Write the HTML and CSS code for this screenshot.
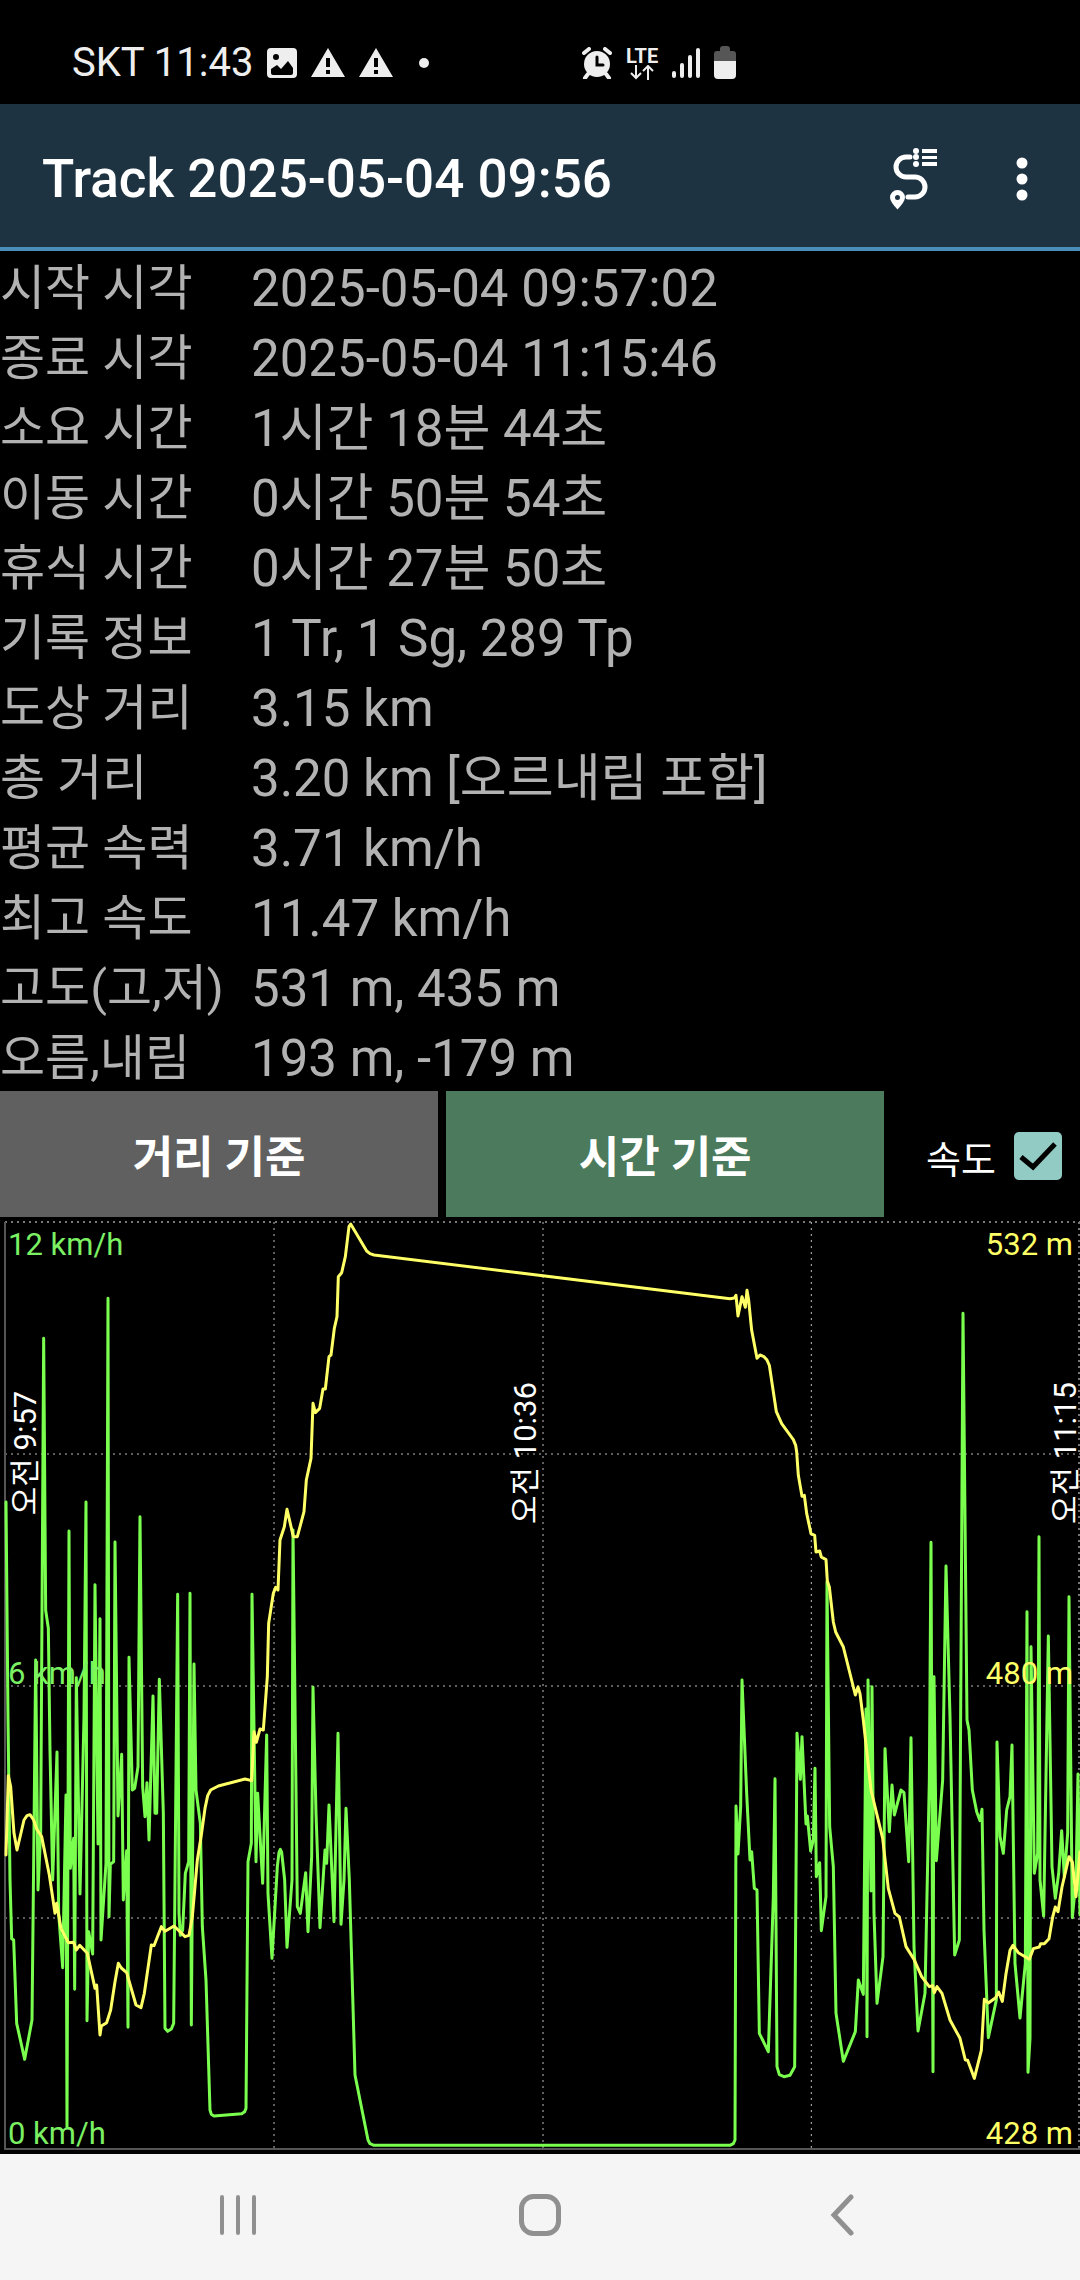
FILE: index.html
```html
<!DOCTYPE html>
<html lang="ko">
<head>
<meta charset="utf-8">
<meta name="viewport" content="width=device-width, initial-scale=1">
<title>Track 2025-05-04 09:56</title>
<link rel="stylesheet" href="styles.css">
</head>
<body>
<div class="status-bar">
  <div class="status-left">
    <span class="carrier">SKT 11:43</span>
    <svg class="status-icon" width="30" height="30" viewBox="0 0 30 30" aria-hidden="true">
      <path fill="currentColor" fill-rule="evenodd" d="M4 0h22a4 4 0 0 1 4 4v22a4 4 0 0 1-4 4H4a4 4 0 0 1-4-4V4a4 4 0 0 1 4-4zM4 21v4q0 2 2 2h18q2 0 2-2v-5l-5-7-7 8-4-4zM9 6a3 3 0 1 0 0 6 3 3 0 0 0 0-6z"/>
    </svg>
    <svg class="status-icon" width="34" height="30" viewBox="0 0 34 30" aria-hidden="true">
      <path fill="currentColor" fill-rule="evenodd" d="M17 0L34 29H0zM15 10v9h4v-9zM15 22v4h4v-4z"/>
    </svg>
    <svg class="status-icon" width="34" height="30" viewBox="0 0 34 30" aria-hidden="true">
      <path fill="currentColor" fill-rule="evenodd" d="M17 0L34 29H0zM15 10v9h4v-9zM15 22v4h4v-4z"/>
    </svg>
    <span class="more-dot"></span>
  </div>
  <div class="status-right">
    <svg width="30" height="32" viewBox="0 0 30 32" aria-hidden="true">
      <circle cx="15" cy="17" r="13" fill="currentColor"/>
      <path d="M2 6l5-4M28 6l-5-4M6 27l-3 4M24 27l3 4" fill="none" stroke="currentColor" stroke-width="4" stroke-linecap="round"/>
      <path d="M15 10v8h6" fill="none" stroke="#000" stroke-width="3" stroke-linecap="round"/>
    </svg>
    <span class="network">LTE
      <svg width="24" height="15" viewBox="0 0 24 15" aria-hidden="true">
        <path d="M6 0v13M1 8l5 5 5-5M18 15V1M13 6l5-5 5 5" fill="none" stroke="currentColor" stroke-width="2"/>
      </svg>
    </span>
    <svg width="28" height="32" viewBox="0 0 28 32" aria-hidden="true">
      <path d="M2 26v3M10 18v11M18 10v19M26 3v26" fill="none" stroke="currentColor" stroke-width="4" stroke-linecap="round"/>
    </svg>
    <svg width="22" height="34" viewBox="0 0 22 34" aria-hidden="true">
      <path fill="#565656" d="M0 16V8q0-3 3-3h3V3q0-3 3-3h4q3 0 3 3v2h3q3 0 3 3v8z"/>
      <path fill="currentColor" d="M0 15h22v14q0 4-4 4H4q-4 0-4-4z"/>
    </svg>
  </div>
</div>

<header class="app-bar">
  <h1 class="title">Track 2025-05-04 09:56</h1>
  <button class="icon-button" type="button" aria-label="Track list">
    <svg width="48" height="64" viewBox="0 0 48 64" aria-hidden="true">
      <path d="M20 10h-4A10 10 0 0 0 16 30H25A10 10 0 0 1 25 50H18" fill="none" stroke="currentColor" stroke-width="5" stroke-linecap="round"/>
      <g fill="currentColor">
        <circle cx="26" cy="4" r="3"/><circle cx="26" cy="10" r="3"/><circle cx="26" cy="17" r="3"/>
        <path d="M32 2h15v4H32zM32 9h15v3H32zM32 15h15v4H32z"/>
        <path fill-rule="evenodd" d="M7.500 43a7.500 7.500 0 0 1 7.500 7.500q0 4-7.500 12Q0 54.500 0 50.500A7.500 7.500 0 0 1 7.500 43zm0 5a2.500 2.500 0 0 0 0 5 2.500 2.500 0 0 0 0-5z"/>
      </g>
    </svg>
  </button>
  <button class="icon-button" type="button" aria-label="Menu">
    <svg width="12" height="44" viewBox="0 0 12 44" fill="currentColor" aria-hidden="true">
      <circle cx="6" cy="6" r="5.500"/><circle cx="6" cy="22" r="5.500"/><circle cx="6" cy="38" r="5.500"/>
    </svg>
  </button>
</header>

<main class="content">
  <table class="stats">
    <tbody>
      <tr><th scope="row">시작 시각</th><td>2025-05-04 09:57:02</td></tr>
      <tr><th scope="row">종료 시각</th><td>2025-05-04 11:15:46</td></tr>
      <tr><th scope="row">소요 시간</th><td>1시간 18분 44초</td></tr>
      <tr><th scope="row">이동 시간</th><td>0시간 50분 54초</td></tr>
      <tr><th scope="row">휴식 시간</th><td>0시간 27분 50초</td></tr>
      <tr><th scope="row">기록 정보</th><td>1 Tr, 1 Sg, 289 Tp</td></tr>
      <tr><th scope="row">도상 거리</th><td>3.15 km</td></tr>
      <tr><th scope="row">총 거리</th><td>3.20 km [오르내림 포함]</td></tr>
      <tr><th scope="row">평균 속력</th><td>3.71 km/h</td></tr>
      <tr><th scope="row">최고 속도</th><td>11.47 km/h</td></tr>
      <tr><th scope="row">고도(고,저)</th><td>531 m, 435 m</td></tr>
      <tr><th scope="row">오름,내림</th><td>193 m, -179 m</td></tr>
    </tbody>
  </table>

  <div class="controls">
    <button class="basis" type="button">거리 기준</button>
    <button class="basis basis-active" type="button">시간 기준</button>
    <div class="speed-option">
      <label for="speed">속도</label>
      <span class="check">
        <input id="speed" type="checkbox" checked>
        <svg class="tick" width="48" height="48" viewBox="0 0 48 48" aria-hidden="true">
          <path d="M7 25l12 10L41 12" fill="none" stroke="#000" stroke-width="5"/>
        </svg>
      </span>
    </div>
  </div>

  <section class="chart" aria-label="속도, 고도">
    <svg class="plot" viewBox="0 0 3240 2811" preserveAspectRatio="none" aria-hidden="true">
      <g class="grid">
        <path d="M15 711H3240M15 1407H3240M15 2103H3240M822 15V2793M1629 15V2793M2434 15V2793"/>
        <path class="grid-edge" d="M15 15H3240M3237 15V2793"/>
      </g>
      <path class="axis" d="M15 15V2796H3240"/>
      <polyline class="line speed" points="18,855 24,1500 30,1989 35,2165 41,2169 50,2419 74,2527 96,2409 102,1839 107,1329 114,2019 122,1849 131,364 137,1180 145,1234 150,1600 158,1989 171,1605 176,2089 188,2252 198,1734 201,2729 207,942 211,1954 221,1864 224,2317 229,1382 240,2031 252,1500 258,855 261,2411 266,2144 278,2211 285,1103 294,1881 300,1205 303,2169 318,1939 324,244 327,2099 331,1942 341,1934 345,975 354,1797 365,1612 370,2049 380,1901 384,2431 387,1321 397,1719 404,1714 414,1649 420,899 428,1709 435,1799 441,1697 447,1869 459,1437 465,1789 470,1789 478,1387 490,1789 495,2434 503,2443 514,2436 521,2419 533,1132 537,2089 541,2155 548,2139 556,1969 566,1934 570,1129 574,2424 582,1341 588,1719 601,1819 607,2129 618,2289 630,2679 634,2692 642,2697 725,2690 734,2684 738,2674 744,1934 754,1879 756,1132 768,1934 773,1729 788,1999 800,1554 804,2029 816,2224 832,1949 837,1906 841,1897 845,1906 854,1989 861,2191 876,1989 879,939 892,2069 901,2089 917,1967 924,2144 935,1919 939,1411 948,1789 960,2132 975,1899 980,1939 987,1764 1002,2114 1014,1549 1023,2122 1032,1989 1038,1774 1048,1989 1065,2574 1104,2769 1110,2780 1122,2785 2190,2785 2200,2780 2205,2769 2208,1767 2214,1911 2222,1769 2226,1389 2240,1729 2250,1929 2255,1904 2263,2014 2271,2019 2278,2449 2305,2504 2320,2039 2325,1685 2331,2549 2338,2573 2352,2579 2370,2575 2384,2549 2391,1549 2401,1687 2406,1559 2418,1821 2422,1797 2432,1902 2440,1869 2445,1654 2449,1979 2459,1937 2464,2141 2478,2039 2481,1094 2489,1829 2500,1949 2508,2389 2530,2533 2566,2444 2575,2289 2590,2332 2598,1476 2601,2459 2604,1389 2613,2022 2616,1409 2622,2089 2631,2359 2649,2219 2655,1595 2668,1844 2676,1704 2683,1794 2703,1719 2712,1727 2726,1934 2733,1562 2742,2189 2754,2442 2775,2329 2788,1689 2793,976 2799,2564 2802,1379 2809,1931 2828,1689 2838,1047 2850,1500 2864,2214 2878,2169 2889,289 2901,1509 2907,1539 2917,1719 2930,1784 2940,1811 2946,1777 2952,2139 2965,2462 2989,2349 2991,1575 3000,1859 3010,1909 3020,1779 3030,1739 3036,1584 3045,2239 3060,2403 3076,2239 3081,1184 3084,2566 3090,2464 3093,1289 3103,1969 3113,1909 3117,959 3120,1989 3131,2097 3145,1257 3156,1949 3166,2044 3176,1969 3185,1841 3193,1979 3203,1849 3207,1139 3217,2102 3228,1989 3234,1671 3240,2094"/>
      <polyline class="line altitude" points="18,1914 25,1676 32,1709 42,1849 51,1899 72,1809 81,1796 90,1793 101,1809 110,1836 125,1859 148,1974 165,2089 170,2059 183,2134 205,2177 221,2176 229,2199 239,2185 262,2209 285,2314 290,2304 300,2454 304,2427 320,2417 332,2379 345,2294 355,2239 364,2253 380,2267 408,2364 423,2372 433,2329 454,2184 462,2186 484,2129 495,2143 522,2127 555,2159 567,2155 577,2099 592,1929 604,1854 615,1774 623,1736 632,1719 655,1707 735,1686 755,1691 762,1544 769,1576 780,1536 790,1539 802,1379 806,1219 820,1129 827,1111 834,1119 840,969 853,929 861,877 880,959 892,959 912,884 919,789 933,724 939,559 946,587 959,574 969,516 976,516 987,419 993,414 1003,334 1011,299 1015,179 1025,167 1036,119 1047,29 1052,21 1100,102 1110,110 1122,114 2190,245 2203,243 2208,235 2214,297 2226,239 2236,271 2241,220 2246,250 2255,340 2271,424 2280,414 2292,419 2301,429 2308,445 2329,584 2345,620 2380,668 2387,685 2390,705 2395,775 2406,838 2413,835 2420,889 2433,950 2444,955 2448,1005 2459,1002 2464,1020 2478,1028 2482,1092 2488,1110 2500,1215 2507,1245 2530,1290 2566,1434 2574,1410 2580,1430 2590,1509 2613,1719 2648,1864 2665,2015 2685,2089 2698,2100 2718,2189 2742,2227 2765,2279 2788,2309 2798,2306 2803,2327 2811,2309 2826,2329 2850,2409 2880,2464 2896,2529 2903,2530 2923,2584 2944,2500 2953,2347 2965,2358 2987,2342 2996,2325 3007,2353 3018,2270 3030,2200 3039,2185 3055,2207 3088,2227 3100,2195 3118,2190 3122,2180 3133,2180 3147,2165 3158,2100 3166,2070 3174,2084 3186,2010 3207,1919 3217,1935 3228,2039 3240,1904"/>
    </svg>
    <div class="scale scale-speed"><span>12 km/h</span><span>6 km/h</span><span>0 km/h</span></div>
    <div class="scale scale-altitude"><span>532 m</span><span>480 m</span><span>428 m</span></div>
    <span class="time time-start">오전 9:57</span>
    <span class="time time-middle">오전 10:36</span>
    <span class="time time-end">오전 11:15</span>
  </section>
</main>

<nav class="nav-bar">
  <button class="nav-button" type="button" aria-label="Recents">
    <svg width="36" height="42" viewBox="0 0 36 42" aria-hidden="true"><path d="M2 3v36M18 3v36M34 3v36" fill="none" stroke="currentColor" stroke-width="4" stroke-linecap="round"/></svg>
  </button>
  <button class="nav-button" type="button" aria-label="Home">
    <svg width="42" height="42" viewBox="0 0 42 42" aria-hidden="true"><rect x="2.500" y="2.500" width="37" height="37" rx="12" fill="none" stroke="currentColor" stroke-width="5"/></svg>
  </button>
  <button class="nav-button" type="button" aria-label="Back">
    <svg width="24" height="42" viewBox="0 0 24 42" aria-hidden="true"><path d="M21 3L4 21l17 18" fill="none" stroke="currentColor" stroke-width="5" stroke-linecap="round"/></svg>
  </button>
</nav>
</body>
</html>
```
FILE: styles.css
```css
* {
  box-sizing: border-box;
}

body {
  margin: 0;
  min-height: 100vh;
  display: flex;
  flex-direction: column;
  background: #000;
  color: #fff;
  font-family: Roboto, "Noto Sans CJK KR", sans-serif;
}

button {
  border: 0;
  padding: 0;
  background: none;
  color: inherit;
  font: inherit;
}

svg {
  display: block;
}

/* System status bar */
.status-bar {
  height: 104px;
  padding: 22px 72px 0;
  display: grid;
  grid-template-columns: 510px 1fr;
  align-items: center;
  color: #eee;
}

.status-left,
.status-right {
  display: flex;
  align-items: center;
}

.status-left {
  gap: 14px;
}

.carrier {
  font-size: 40px;
  line-height: 40px;
}

.more-dot {
  width: 10px;
  height: 10px;
  margin-left: 12px;
  border-radius: 50%;
  background: currentColor;
}

.status-right {
  gap: 14px;
}

.network {
  display: flex;
  flex-direction: column;
  align-items: center;
  font-size: 20px;
  font-weight: 700;
  line-height: 18px;
}

/* App bar */
.app-bar {
  height: 147px;
  padding: 6px 52px 0 42px;
  display: flex;
  align-items: center;
  gap: 78px;
  background: #1e3342;
  border-bottom: 4px solid #4a8fba;
}

.title {
  flex: 1;
  margin: 0;
  font-size: 53px;
  font-weight: 500;
  line-height: 64px;
}

/* Track figures */
.content {
  flex: 1;
  display: flex;
  flex-direction: column;
}

.stats {
  border-collapse: collapse;
  color: #b2b2b2;
  font-size: 51px;
  line-height: 64px;
}

.stats th,
.stats td {
  height: 70px;
  padding: 6px 0 0;
  font-weight: 400;
  text-align: left;
  white-space: nowrap;
}

.stats th {
  width: 251px;
  font-size: 49px;
}

/* Basis buttons and speed toggle */
.controls {
  height: 126px;
  display: grid;
  grid-template-columns: 7fr 7fr 3fr;
  column-gap: 8px;
}

.basis {
  background: #606060;
  font-size: 44px;
  font-weight: 700;
}

.basis-active {
  background: #4b7b5c;
}

.speed-option {
  padding: 4px 18px 0 0;
  display: flex;
  align-items: center;
  justify-content: flex-end;
  gap: 18px;
  font-size: 38px;
}

.check {
  display: grid;
}

.check input,
.tick {
  grid-area: 1 / 1;
}

.check input {
  appearance: none;
  width: 48px;
  height: 48px;
  margin: 0;
  border-radius: 5px;
  background: #92cac4;
}

.tick {
  visibility: hidden;
  pointer-events: none;
}

.check input:checked + .tick {
  visibility: visible;
}

/* Speed and altitude chart */
.chart {
  flex: 1;
  min-height: 480px;
  position: relative;
  display: grid;
  font-size: 31px;
  line-height: 36px;
}

.plot {
  position: absolute;
  inset: 0;
  width: 100%;
  height: 100%;
}

.plot path,
.plot polyline {
  fill: none;
  vector-effect: non-scaling-stroke;
}

.grid {
  stroke: #bbb;
  stroke-width: 1px;
  stroke-dasharray: 2 4;
}

.grid-edge {
  stroke: #777;
  stroke-width: 2px;
}

.axis {
  stroke: #555;
  stroke-width: 2px;
}

.line {
  stroke-width: 3px;
  stroke-linejoin: round;
  stroke-linecap: round;
}

.speed {
  stroke: #7aff4f;
}

.altitude {
  stroke: #ffff66;
}

.scale {
  grid-area: 1 / 1;
  position: relative;
  padding: 10px 7px 2px 8px;
  display: flex;
  flex-direction: column;
  justify-content: space-between;
}

.scale-speed {
  color: #7bf063;
}

.scale-altitude {
  color: #ffff66;
  text-align: right;
}

.scale span:nth-child(2) {
  padding-bottom: 32px;
}

.time {
  position: absolute;
  top: 25%;
  padding-bottom: 4px;
  line-height: 28px;
  writing-mode: vertical-rl;
  text-orientation: sideways;
  transform: translateY(-50%) rotate(180deg);
}

.time-start {
  left: 12px;
}

.time-middle {
  right: 50%;
}

.time-end {
  right: 0;
}

/* System navigation */
.nav-bar {
  height: 126px;
  padding: 0 8%;
  display: grid;
  grid-template-columns: repeat(3, 1fr);
  background: #f5f5f5;
  color: #909090;
}

.nav-button {
  display: grid;
  place-items: center;
  padding-bottom: 4px;
}
```
